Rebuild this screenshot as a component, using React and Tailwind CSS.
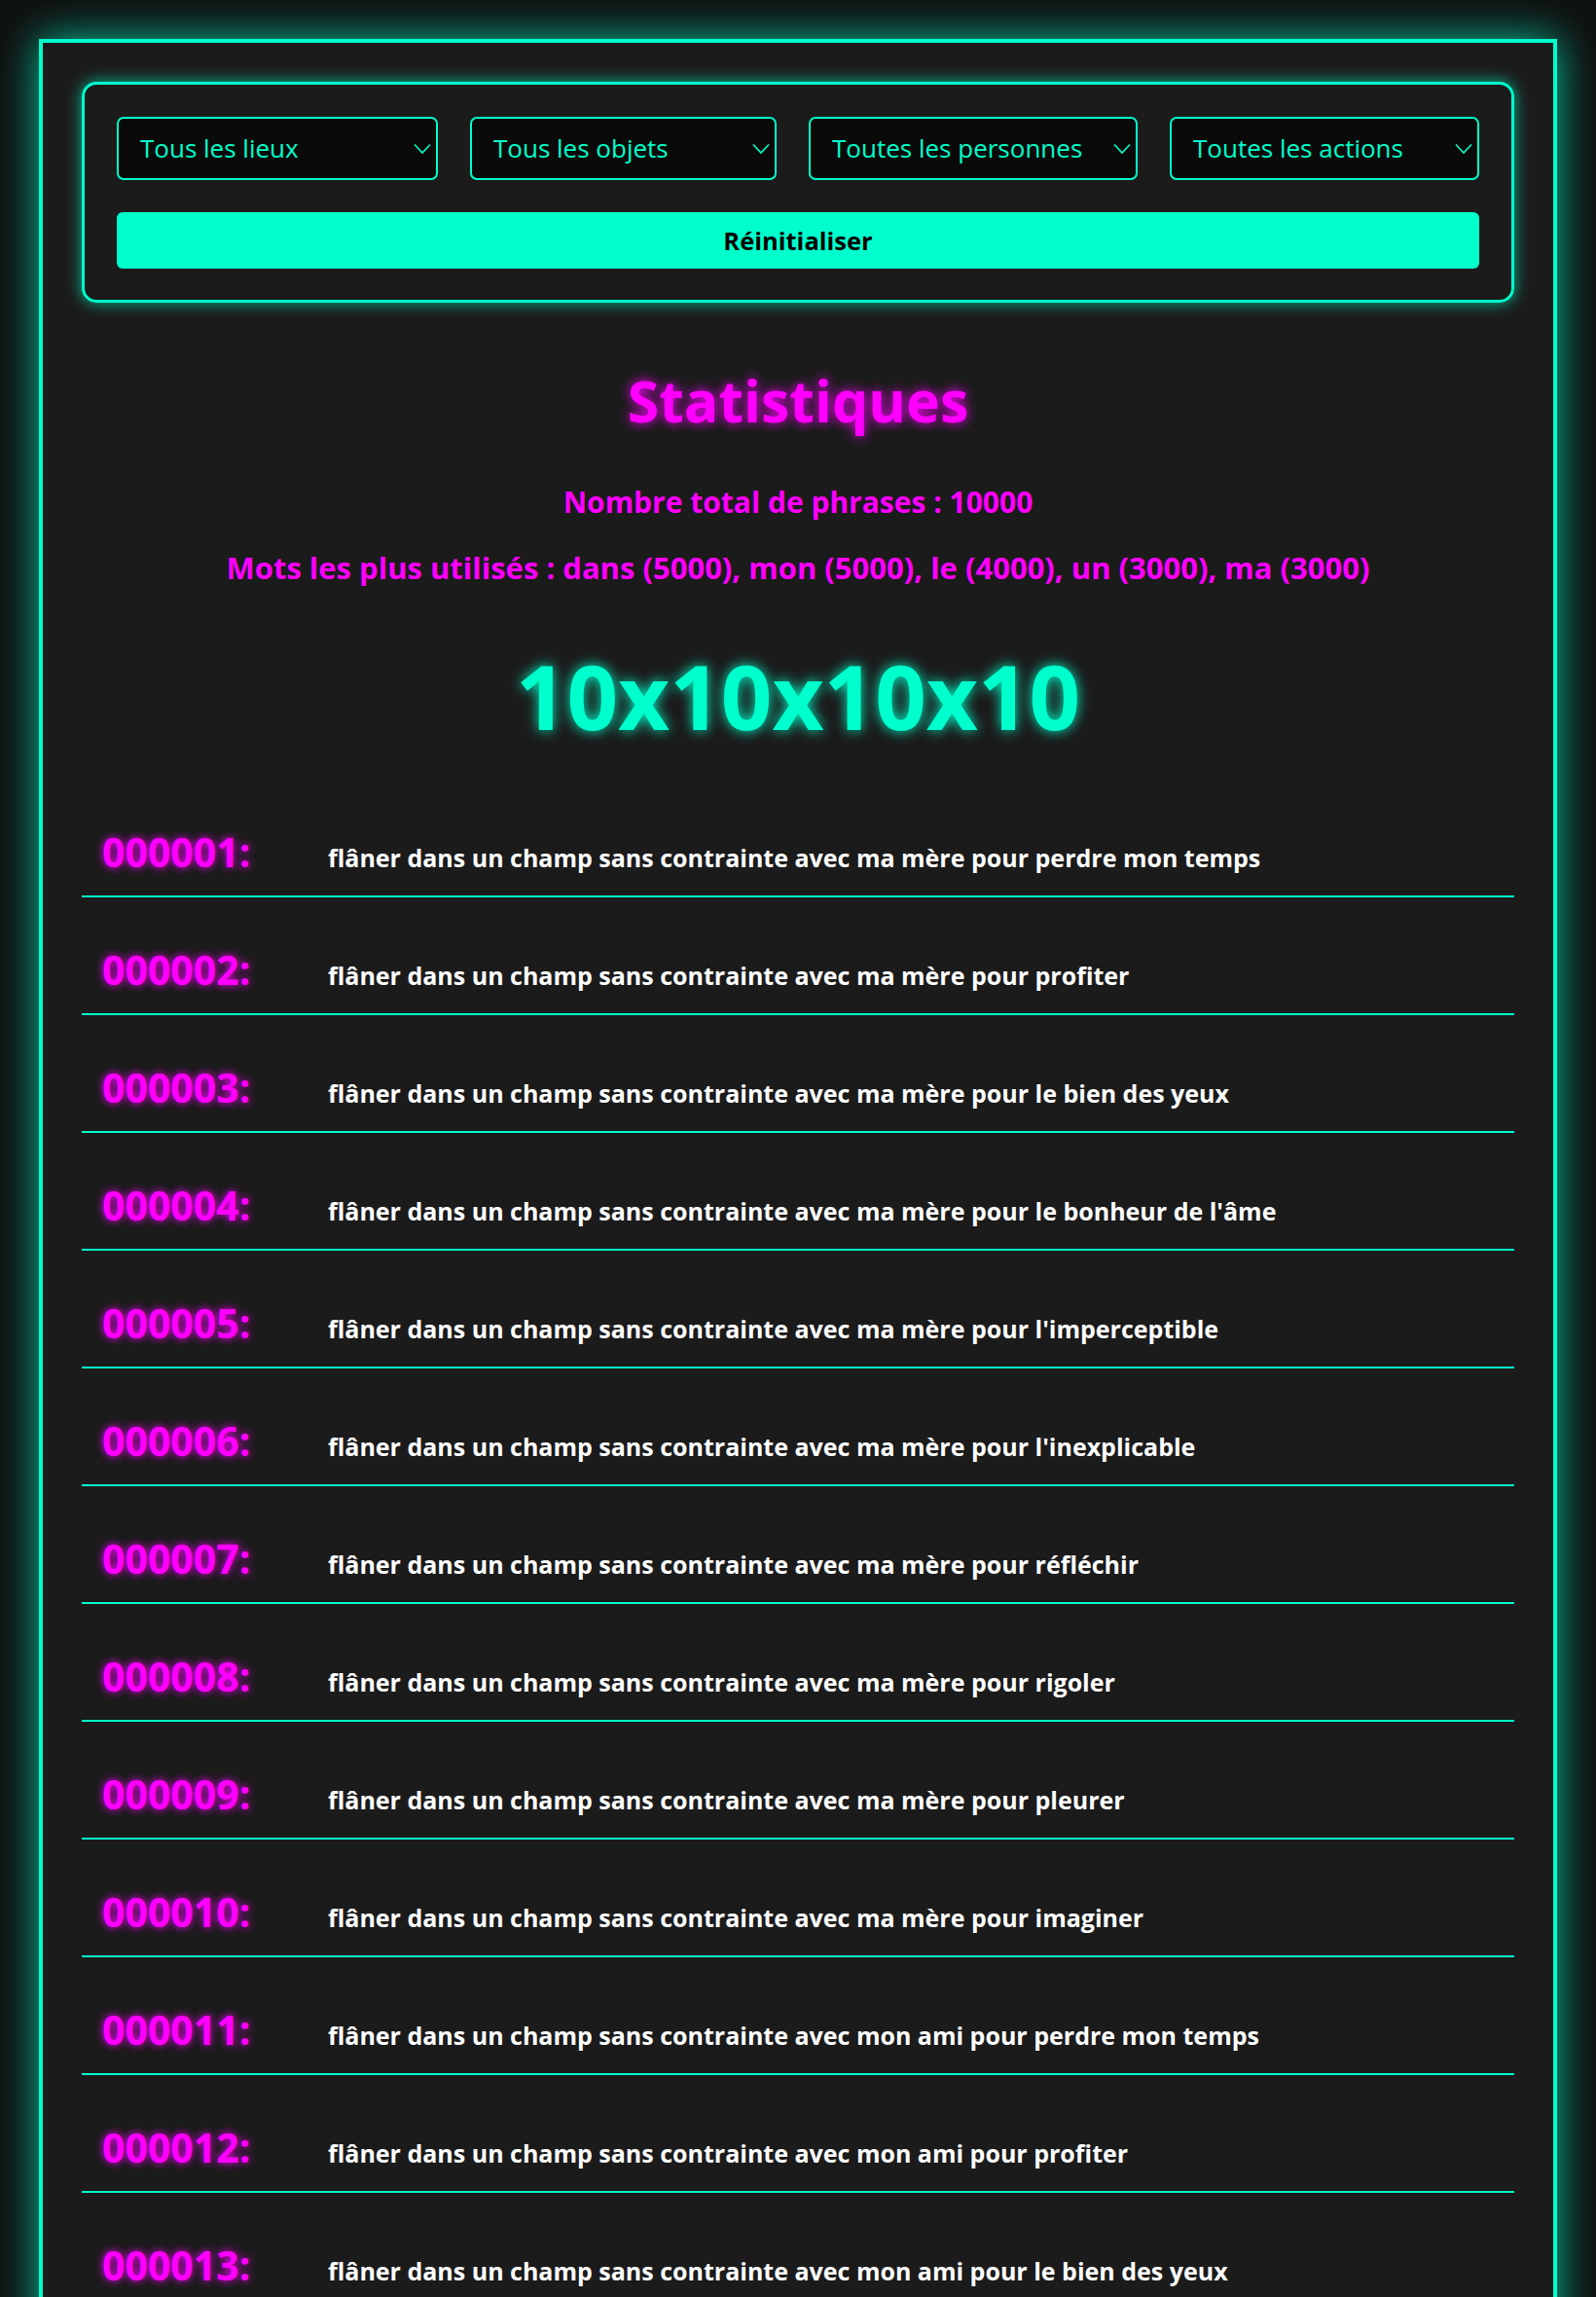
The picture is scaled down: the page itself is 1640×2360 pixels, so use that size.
import React from "react";

const TEAL = "#00ffcc";

const endings = [
  "pour perdre mon temps",
  "pour profiter",
  "pour le bien des yeux",
  "pour le bonheur de l'âme",
  "pour l'imperceptible",
  "pour l'inexplicable",
  "pour réfléchir",
  "pour rigoler",
  "pour pleurer",
  "pour imaginer",
];

const rows = [];
for (let i = 0; i < 17; i++) {
  const who = i < 10 ? "ma mère" : "mon ami";
  rows.push({
    id: String(i + 1).padStart(6, "0"),
    text: `flâner dans un champ sans contrainte avec ${who} ${endings[i % 10]}`,
  });
}

function Chevron() {
  return (
    <svg
      width="18"
      height="12"
      viewBox="0 0 18 12"
      className="pointer-events-none absolute right-[7px] top-1/2 -translate-y-1/2"
      fill="none"
    >
      <path d="M1 1.5 L9 10 L17 1.5" stroke={TEAL} strokeWidth="1.6" />
    </svg>
  );
}

function Select({ label, width }) {
  return (
    <div className={`relative h-[65px] shrink-0 ${width}`}>
      <select
        className="h-full w-full appearance-none rounded-[7px] border-2 border-[#00ffcc] bg-[#0a0a0a] pl-[22px] text-[26px] text-[#00ffcc] outline-none"
        defaultValue={label}
      >
        <option>{label}</option>
      </select>
      <Chevron />
    </div>
  );
}

export default function App() {
  return (
    <div className="min-h-screen bg-[#0f1111] p-10 font-['Open_Sans',sans-serif]">
      <div className="border-4 border-[#00ffcc] bg-[#1b1b1b] p-10 shadow-[0_0_40px_rgba(0,255,204,0.75)]">
        <div className="rounded-[15px] border-[3px] border-[#00ffcc] p-[33px] pb-[32px] shadow-[0_0_16px_rgba(0,255,204,0.7)]">
          <div className="flex gap-[33px]">
            <Select label="Tous les lieux" width="w-[330px]" />
            <Select label="Tous les objets" width="w-[315px]" />
            <Select label="Toutes les personnes" width="w-[338px]" />
            <Select label="Toutes les actions" width="w-[318px]" />
          </div>
          <button className="mt-[33px] h-[58px] w-full rounded-[6px] bg-[#00ffcc] text-[25.5px] font-bold text-black">
            Réinitialiser
          </button>
        </div>

        <h2 className="mt-[71px] text-center text-[59px] font-bold leading-none text-[#ff00ff] [text-shadow:0_0_12px_#ff00ff]">
          Statistiques
        </h2>
        <p className="mt-[60px] text-center text-[30px] font-bold leading-none text-[#ff00ff]">
          Nombre total de phrases : 10000
        </p>
        <p className="mt-[37px] text-center text-[31px] font-bold leading-none text-[#ff00ff]">
          Mots les plus utilisés : dans (5000), mon (5000), le (4000), un (3000), ma (3000)
        </p>
        <h1 className="mt-[70px] text-center text-[92px] font-bold leading-none text-[#00ffcc] [text-shadow:0_0_14px_#00ffcc]">
          10x10x10x10
        </h1>

        <ul className="mt-[40px]">
          {rows.map((r) => (
            <li
              key={r.id}
              className="flex items-baseline border-b-2 border-[#00ffcc] pl-[21px] pt-[54px] pb-[24px]"
            >
              <span className="w-[232px] shrink-0 text-[41px] font-bold leading-none text-[#ff00ff] [text-shadow:0_0_9px_#ff00ff]">
                {r.id}:
              </span>
              <span className="text-[25px] font-bold leading-none text-white">{r.text}</span>
            </li>
          ))}
        </ul>
      </div>
    </div>
  );
}
